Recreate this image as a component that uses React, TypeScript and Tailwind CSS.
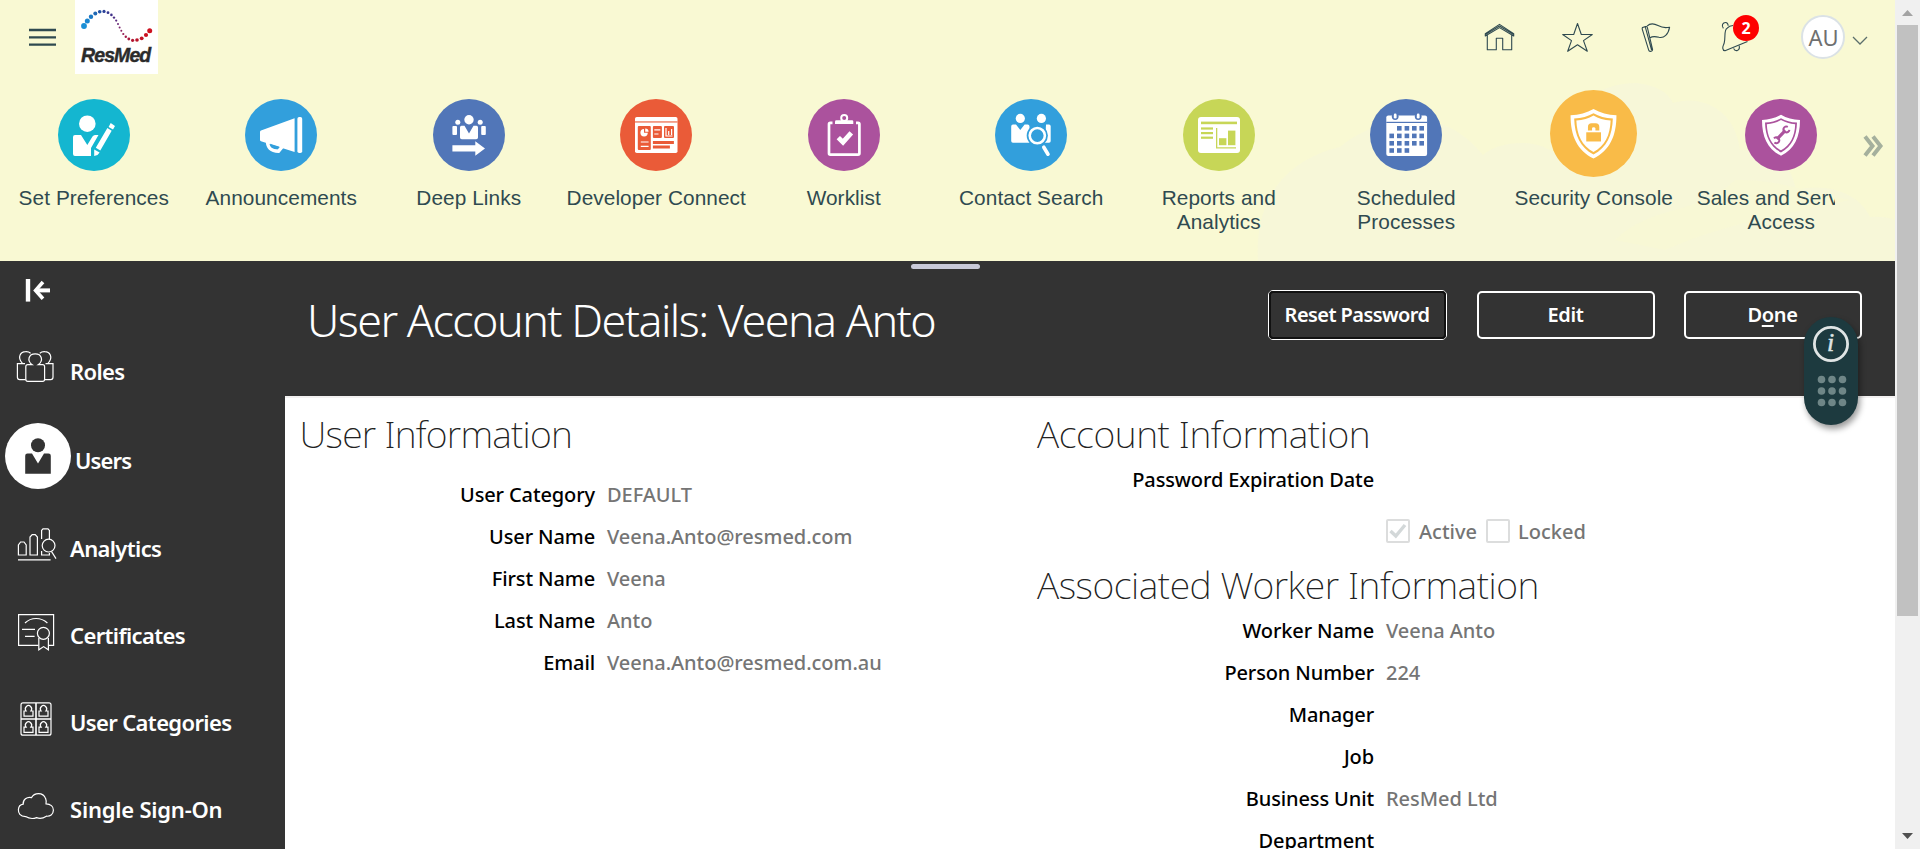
import React from "react";

type Tile = { label: string; color: string; icon: React.ReactNode; large?: boolean };

function Shield({ children }: { children: React.ReactNode }) {
  return (
    <>
      <path
        d="M36 15.7C30.5 19 24 20.6 17 20.9C17 38 22.5 50 36 56.7C49.5 50 55 38 55 20.9C48 20.6 41.5 19 36 15.7Z"
        fill="#fff"
      />
      <path
        d="M36 19.2C31.5 21.8 26.3 23.2 20 23.6C20.4 37.5 25 47.7 36 53.4C47 47.7 51.6 37.5 52 23.6C45.7 23.2 40.5 21.8 36 19.2Z"
        fill="currentColor"
      />
      <path
        d="M36 21C32 23.4 27.3 24.8 21.8 25.2C22.3 37.5 26.5 46.2 36 51.3C45.5 46.2 49.7 37.5 50.2 25.2C44.7 24.8 40 23.4 36 21Z"
        fill="#fff"
      />
      {children}
    </>
  );
}

const calendarCells: [number, number][] = [
  [27, 27], [34.6, 27], [42, 27], [49.4, 27],
  [19.4, 34.6], [27, 34.6], [34.6, 34.6], [42, 34.6], [49.4, 34.6],
  [19.4, 42], [27, 42], [34.6, 42], [42, 42], [49.4, 42],
  [19.4, 49.2], [27, 49.2], [34.6, 49.2],
];

const tiles: Tile[] = [
  {
    label: "Set Preferences",
    color: "text-[#14b6d0]",
    icon: (
      <g fill="#fff">
        <circle cx="29.3" cy="24.7" r="8.3" />
        <path d="M17 36H23L29.3 46L34.5 37.5Q35.5 36 37 36H40.5L33 49V57H17Q15 57 15 55V38Q15 36 17 36Z" />
        <path d="M52.7 24L57 26.9L55 30.6L50.6 27.9ZM49.4 29L53.7 31.8L42.3 51.6L37.8 48.8ZM36.2 50.5L41.6 53.6L39.5 56L36.2 57Z" />
      </g>
    ),
  },
  {
    label: "Announcements",
    color: "text-[#329fdc]",
    icon: (
      <>
        <path d="M22.5 42C22.5 50 27 52 33.5 52.2L37.5 47.5" fill="none" stroke="#fff" strokeWidth="3.4" />
        <path d="M15 33Q15 32 16 31.6L49.6 19.3V53L16 42.3Q15 42 15 41Z" fill="#fff" />
        <path d="M25 44.8L34.5 47.7Q32 50.3 28 49Q25.4 48 25 44.8Z" fill="currentColor" />
        <rect x="52.4" y="18" width="4.8" height="36" rx="1.8" fill="#fff" />
      </>
    ),
  },
  {
    label: "Deep Links",
    color: "text-[#5176b8]",
    icon: (
      <g fill="#fff">
        <circle cx="36" cy="20.8" r="4.7" />
        <circle cx="24.8" cy="23.3" r="2.5" />
        <circle cx="47.2" cy="23.3" r="2.5" />
        <path d="M28.5 26.7H31.5L36 34.5L40.5 26.7H43.5Q45 26.7 45 28.5V38.5Q45 40.3 43.2 40.3H28.8Q27 40.3 27 38.5V28.5Q27 26.7 28.5 26.7Z" />
        <rect x="19.4" y="27" width="4.6" height="9" rx="1" />
        <rect x="48.2" y="27" width="4.6" height="9" rx="1" />
        <path d="M19.4 46.2H42.3V42.3L52 49.5L42.3 56.7V52.6H19.4Z" />
      </g>
    ),
  },
  {
    label: "Developer Connect",
    color: "text-[#ea5b38]",
    icon: (
      <>
        <rect x="15" y="18" width="42.5" height="36" rx="1.8" fill="#fff" />
        <g fill="currentColor">
          <rect x="15" y="22.4" width="42.5" height="1.1" />
          <rect x="17.8" y="27" width="13" height="24" rx="1" />
          <rect x="32.9" y="27" width="9" height="12" rx="1" />
          <rect x="44" y="27" width="10" height="12" rx="1" />
          <rect x="32.9" y="42" width="21" height="3" />
          <rect x="32.9" y="46.5" width="17" height="3" />
        </g>
        <g fill="none" stroke="#fff" strokeWidth="1.2">
          <path d="M20.8 43H28.6M20.8 47.4H28.6M34.3 30.8H40.3M34.3 35H38.5" />
          <path d="M46 29V37H52.5M48.7 36V32M51.6 36V30" />
        </g>
        <path d="M24 30V33.8H27.8A3.7 3.7 0 1 1 24 30ZM25.2 29.6A3.4 3.4 0 0 1 28.6 32.8H25.2Z" fill="#fff" />
      </>
    ),
  },
  {
    label: "Worklist",
    color: "text-[#ab529d]",
    icon: (
      <>
        <path d="M24.5 23.8H22.3Q21 23.8 21 25.2V54.2Q21 55.6 22.3 55.6H50Q51.4 55.6 51.4 54.2V25.2Q51.4 23.8 50 23.8H48" fill="none" stroke="#fff" strokeWidth="2.7" />
        <path d="M27 25V22.6Q27 21.3 28.4 21.3H44Q45.3 21.3 45.3 22.6V25Z" fill="#fff" />
        <circle cx="36.2" cy="19" r="3" fill="none" stroke="#fff" strokeWidth="2" />
        <path d="M30.3 38.6L35 43.2L43.3 33.8" fill="none" stroke="#fff" strokeWidth="4.8" />
      </>
    ),
  },
  {
    label: "Contact Search",
    color: "text-[#329fdc]",
    icon: (
      <>
        <g fill="#fff">
          <circle cx="25.3" cy="19.4" r="4.6" />
          <circle cx="46.4" cy="19.4" r="4.6" />
          <path d="M18 25.6H21L25.3 31L29.6 25.6H32.6Q34.5 25.6 34.5 27.5V43.7H18Q16.2 43.7 16.2 42V27.4Q16.2 25.6 18 25.6Z" />
          <path d="M51 25.6H54Q55.7 25.6 55.7 27.4V42Q55.7 43.7 54 43.7H50Z" />
        </g>
        <circle cx="42.3" cy="36.6" r="10.6" fill="currentColor" />
        <circle cx="42.3" cy="36.6" r="7.6" fill="none" stroke="#fff" strokeWidth="2.6" />
        <path d="M48.8 48.2L53 55.2" stroke="#fff" strokeWidth="3.6" strokeLinecap="round" />
      </>
    ),
  },
  {
    label: "Reports and Analytics",
    color: "text-[#c7d657]",
    icon: (
      <>
        <rect x="15" y="18" width="42" height="36" rx="3" fill="#fff" />
        <g fill="currentColor">
          <rect x="18" y="22.6" width="36" height="2.6" />
          <rect x="18" y="28.4" width="12" height="2.2" />
          <rect x="18" y="33" width="12" height="2.2" />
          <rect x="18" y="37.6" width="12" height="2.2" />
          <path d="M33 29H34.3V48.3H53V49.5H33Z" />
          <rect x="36" y="39.2" width="7.4" height="7" />
          <rect x="45" y="31.6" width="7.4" height="14.6" />
        </g>
      </>
    ),
  },
  {
    label: "Scheduled Processes",
    color: "text-[#5176b8]",
    icon: (
      <>
        <rect x="16.3" y="16.6" width="40.8" height="40.4" rx="2" fill="#fff" />
        <g fill="currentColor">
          <rect x="16.3" y="22.8" width="40.8" height="1.2" />
          {calendarCells.map(([x, y]) => (
            <rect key={`${x}-${y}`} x={x} y={y} width="4.6" height="4.6" />
          ))}
          <circle cx="25.2" cy="17.6" r="3.4" />
          <circle cx="48.2" cy="17.6" r="3.4" />
        </g>
        <rect x="23.8" y="14.6" width="2.8" height="5" rx="1.3" fill="#fff" />
        <rect x="46.8" y="14.6" width="2.8" height="5" rx="1.3" fill="#fff" />
      </>
    ),
  },
  {
    label: "Security Console",
    color: "text-[#f9bb48]",
    large: true,
    icon: (
      <Shield>
        <rect x="30" y="35" width="12.2" height="7.6" fill="currentColor" />
        <path d="M31.4 33.6V30.6Q31.4 27.6 34.4 27.6H37.8Q40.8 27.6 40.8 30.6V33.6H37.6V31.6Q37.6 30.8 36.1 30.8Q34.8 30.8 34.8 31.6V33.6Z" fill="currentColor" />
      </Shield>
    ),
  },
  {
    label: "Sales and Service Access",
    color: "text-[#ab529d]",
    icon: (
      <Shield>
        <path d="M32 40.2L40.4 31.4" stroke="currentColor" strokeWidth="3.2" />
        <path d="M42.8 27.8A3 3 0 1 0 44.4 30.8M29.4 43.6A3 3 0 1 0 29 39.4" fill="none" stroke="currentColor" strokeWidth="2" />
      </Shield>
    ),
  },
];

function HeaderBackdrop() {
  return (
    <svg className="absolute inset-0" width="1895" height="261" viewBox="0 0 1895 261">
      <path
        d="M1258 261C1254 200 1285 160 1340 147C1375 118 1440 100 1483 155C1500 140 1540 138 1556 155C1560 105 1600 83 1637 83C1655 85 1668 92 1673 103C1700 94 1735 108 1740 150C1775 150 1790 160 1796 190C1830 182 1860 195 1870 217Q1885 216 1895 220V261Z"
        fill="#f7f7d8"
      />
      <path d="M1615 240C1650 205 1700 215 1735 180C1780 180 1800 190 1850 200C1780 215 1720 225 1665 250Z" fill="#f8f8d5" />
    </svg>
  );
}

function TopBar() {
  return (
    <div className="relative flex h-[74px] justify-between text-[#2f4a50]">
      <div className="flex">
        <svg width="75" height="74" viewBox="0 0 75 74" stroke="currentColor" strokeWidth="2.3">
          <path d="M29 30H56M29 37.3H56M29 44.6H56" />
        </svg>
        <Logo />
      </div>
      <svg width="320" height="74" viewBox="1440 0 320 74" className="ml-auto" fill="none" stroke="currentColor" strokeWidth="1.1" strokeLinejoin="round">
        <path d="M1485.3 33.6L1499.5 24.4L1513.7 33.6V36L1499.5 27.6L1485.3 36ZM1487.3 35V49.8H1496.3V38.3H1502.7V49.8H1511.7V35M1485.3 34.6L1499.5 26L1513.7 34.6" />
        <path d="M1577.5 23.5L1581.3 34.5H1592.3L1583.5 40.6L1587.3 51.3L1577.5 44.8L1567.7 51.3L1571.5 40.6L1562.7 34.5H1573.7Z" />
        <path d="M1642.5 27.5L1645.5 26.6Q1647 26.4 1647.4 27.6L1652.6 49.6Q1652.6 51 1651.3 51.2L1650.2 51.4Q1649 51.4 1648.7 50.2L1642.3 29.3Q1642 28 1642.5 27.5ZM1645.2 26.7L1651.6 50" />
        <path d="M1647 26.2C1650 23.2 1654 23.4 1658 25.6C1662 27.8 1665.5 28.2 1669.6 27.2C1668.4 34.5 1664 38.4 1659 37.3C1655.6 36.4 1652.6 36 1650 37.8" />
        <path d="M1733 25.5C1730.5 25.6 1728.5 26.6 1727.2 28.2C1723.6 29.5 1725.8 38 1724.2 43C1723.4 45.6 1722.4 46.6 1722.8 48.4Q1723 50.6 1725 50.8L1747.5 41.4" />
        <path d="M1723.4 28.4C1721 25.5 1723 22.4 1725.6 22.5Q1728 22.6 1728.2 25.8M1733.6 48.4Q1734.5 51 1737.2 50.6Q1740 49.6 1739.2 45.6" />
      </svg>
      <div className="flex w-[135px] items-center pl-[41px]">
        <div className="flex h-[44px] w-[44px] items-center justify-center rounded-full border-2 border-[#dbe2e6] bg-white pl-px font-['Noto_Sans',sans-serif] text-[22px] text-[#6f6f6f]">
          AU
        </div>
        <svg width="16" height="9" viewBox="0 0 16 9" className="mt-[7px] ml-[7px]" fill="none" stroke="#5c6f6c" strokeWidth="1.3">
          <path d="M1 1L8 8L15 1" />
        </svg>
      </div>
      <div className="absolute top-[15px] left-[1733px] flex h-[26px] w-[26px] items-center justify-center rounded-full bg-[#fe0000] font-['Noto_Sans',sans-serif] text-[16px] font-bold text-white">
        2
      </div>
    </div>
  );
}

const logoDots: [number, number, number, string][] = [
  [9, 26, 2.9, "#1a8fd6"], [12.3, 21, 2.5, "#1a86d0"], [16, 16.8, 2.2, "#1b78c4"], [20.3, 13.5, 2, "#2068b4"],
  [24.7, 11.7, 1.8, "#2353a4"], [29, 11.4, 1.6, "#2c4199"], [33, 12.7, 1.4, "#34358f"], [36.4, 14.9, 1.3, "#3f3089"],
  [39, 17.6, 1.2, "#4d2e84"], [41.2, 20.6, 1.1, "#5c2c80"], [43, 23.9, 1, "#6b2a78"], [44.6, 27.4, 1, "#7c2870"],
  [46.3, 30.8, 1, "#8a2362"], [48.3, 34, 1.1, "#971e55"], [50.8, 36.8, 1.2, "#a11b48"], [53.8, 39, 1.4, "#aa183c"],
  [57.6, 40.3, 1.6, "#b21531"], [62, 40, 1.8, "#ba1329"], [66.7, 38.3, 1.9, "#c31124"], [71, 35, 2.1, "#cb1120"],
  [74.7, 30.8, 2.5, "#cd1220"],
];

function Logo() {
  return (
    <div className="relative h-[74px] w-[83px] bg-white">
      <svg width="83" height="74" viewBox="0 0 83 74">
        {logoDots.map(([x, y, r, c]) => (
          <circle key={x} cx={x} cy={y} r={r} fill={c} />
        ))}
      </svg>
      <span className="absolute top-[44px] left-[6px] font-['Liberation_Sans',sans-serif] text-[19.5px] leading-[22px] font-bold tracking-[-0.9px] text-[#2b2b2b] italic [-webkit-text-stroke:0.4px_#2b2b2b]">
        ResMed
      </span>
    </div>
  );
}

function TileStrip() {
  return (
    <div className="relative flex">
      <div className="flex w-[1835px] overflow-hidden pt-[16px]">
        {tiles.map((t) => (
          <div key={t.label} className="flex w-[187.5px] shrink-0 flex-col items-center">
            <div className={`flex h-[90px] items-center justify-center ${t.color}`}>
              <svg
                width={t.large ? 87 : 72}
                height={t.large ? 87 : 72}
                viewBox="0 0 72 72"
                className={t.large ? "-mt-[3px]" : ""}
              >
                <circle cx="36" cy="36" r="36" fill="currentColor" />
                {t.icon}
              </svg>
            </div>
            <div
              className={`mt-[6px] text-center font-['Liberation_Sans',Arial,sans-serif] text-[20.8px] leading-[24px] tracking-[0.08px] text-[#2f4a50] ${
                t.label.endsWith("Analytics") || t.label.endsWith("Processes") ? "w-[130px]" : "w-[187px]"
              }`}
            >
              {t.label}
            </div>
          </div>
        ))}
      </div>
      <svg width="60" height="40" viewBox="0 0 60 40" className="mt-[52px] fill-none stroke-[#a5b09d]" strokeWidth="4">
        <path d="M30 10.5L37.5 20L30 29.5M38 10.5L45.5 20L38 29.5" />
      </svg>
    </div>
  );
}

const person = "h-9v-5.2h2.1a3.1 3.3 0 1 1 4.8 0h2.1Z";

const navItems: {
  label: string;
  height: string;
  box: string;
  icon: React.ReactNode;
  active?: boolean;
  tracking?: string;
}[] = [
  {
    label: "Roles",
    height: "h-[89px]",
    box: "0 327 71 89",
    icon: (
      <>
        <path d="M25 363.6H17.4V377.2Q17.4 379.6 19.8 379.6H25.6M22.4 363.4C16.6 356.5 21 351.6 25.6 351.6Q28.6 351.4 30.6 353.2M45.5 363.6H53V377.2Q53 379.6 50.6 379.6H44.8M48 363.4C53.8 356.5 49.4 351.6 44.8 351.6Q41.8 351.4 39.8 353.2" />
        <path d="M27.8 364.7H32.2C26.6 360.6 28.6 353.8 35.2 353.8C41.8 353.8 43.8 360.6 38.2 364.7H42.6Q44.6 364.7 44.6 366.7V379.3Q44.6 381.4 42.6 381.4H27.8Q25.8 381.4 25.8 379.3V366.7Q25.8 364.7 27.8 364.7Z" />
      </>
    ),
  },
  {
    label: "Users",
    height: "h-[89px]",
    box: "0 416 76 89",
    active: true,
    tracking: "tracking-[-0.85px]",
    icon: (
      <>
        <circle cx="38" cy="456" r="33" fill="#fff" stroke="none" />
        <g fill="#333" stroke="none">
          <circle cx="38" cy="445.3" r="7" />
          <path d="M27.5 453.5H32L38 463.5L44 453.5H48.5Q50.8 453.5 50.8 455.8V473.8H25.2V455.8Q25.2 453.5 27.5 453.5Z" />
        </g>
      </>
    ),
  },
  {
    label: "Analytics",
    height: "h-[87px]",
    box: "0 505 71 87",
    icon: (
      <>
        <path d="M18.4 555V545L20.6 542H24L26.2 545V555ZM30 555V537L32.2 534.6H35.2L37.4 537V555ZM41.6 539V530.4L43 528.8H48L49.4 530.4V539M41.6 551V555H49.4V553" />
        <circle cx="48.6" cy="545.6" r="6.4" />
        <path d="M51.6 551.6L56 558.6" />
        <path d="M18 559.8H50.6" />
      </>
    ),
  },
  {
    label: "Certificates",
    height: "h-[87px]",
    box: "0 592 71 87",
    icon: (
      <>
        <path d="M38.4 645.3H18.6V614.6H53.6V645.3H48.6M25 623C31 617 41 617 47.4 623M22 629.3H35M25 636.3H34.6" />
        <circle cx="43.4" cy="633.3" r="6" />
        <path d="M38.8 638V649.8L43.6 646.6L48.4 649.8V638" />
      </>
    ),
  },
  {
    label: "User Categories",
    height: "h-[87px]",
    box: "0 679 71 87",
    icon: (
      <>
        <rect x="21" y="702.8" width="30" height="32.4" rx="2" />
        <path d="M36 703V735M21 719H51" strokeWidth="1.6" />
        <path d={`M33 716.2${person}`} />
        <path d={`M48 716.2${person}`} />
        <path d={`M33 732.4${person}`} />
        <path d={`M48 732.4${person}`} />
      </>
    ),
  },
  {
    label: "Single Sign-On",
    height: "h-[87px]",
    box: "0 766 71 87",
    tracking: "tracking-[-0.22px]",
    icon: (
      <path d="M25.6 816.6C20 816.4 18.2 813 18.4 809.6C18.6 806.4 20.6 804.6 23.2 804.2C22.6 799.6 27 796.4 31.6 797.6C34 792.6 43 791.6 45.6 798.6Q46.6 801 46 803.8C50.4 804 53.6 806.4 53.4 810.2C53.2 814.6 50 816.6 46.4 816.2C42.6 818.6 38.6 818.4 36.6 817.6C33 819 28.6 818.4 25.6 816.6Z" />
    ),
  },
];

function Sidebar() {
  return (
    <nav className="h-[588px] w-[285px] shrink-0 overflow-hidden bg-[#333]">
      <svg width="71" height="66" viewBox="0 261 71 66" fill="none" stroke="#fff" strokeWidth="3.6">
        <path d="M28 279V301.6" strokeWidth="4.4" />
        <path d="M36 290.4H50" strokeWidth="4" />
        <path d="M43 282L35.6 290.4L43 298.8" />
      </svg>
      {navItems.map((n) => (
        <a key={n.label} className={`flex items-center ${n.height}`}>
          <svg
            width={n.active ? 76 : 71}
            viewBox={n.box}
            className="h-full shrink-0"
            fill="none"
            stroke="#fff"
            strokeWidth="1.2"
          >
            {n.icon}
          </svg>
          <span
            className={`-ml-px text-[22px] font-semibold whitespace-nowrap text-white ${n.tracking ?? "tracking-[-0.64px]"}`}
          >
            {n.label}
          </span>
        </a>
      ))}
    </nav>
  );
}

function Row({ label, value, left }: { label: string; value?: string; left?: boolean }) {
  return (
    <div className="flex h-[42px] items-center text-[20px] font-medium whitespace-nowrap">
      <span className={`text-right tracking-[-0.12px] text-black ${left ? "w-[310px]" : "w-[338px]"}`}>{label}</span>
      <span className="ml-[12px] tracking-[-0.04px] text-[#757575]">{value}</span>
    </div>
  );
}

const outline = "flex h-[48px] w-[178px] items-center justify-center rounded-[5px] border-2 border-white";

function Panel() {
  return (
    <div className="flex w-[1610px] flex-col">
      <div className="flex h-[135px] justify-between bg-[#333] pl-[22px] text-white">
        <h1 className="pt-[29px] text-[44.8px] leading-[60px] font-light tracking-[-1.52px] whitespace-nowrap">
          User Account Details: Veena Anto
        </h1>
        <div className="flex items-start gap-[29px] pt-[30px] pr-[33.5px] text-[20px] font-semibold tracking-[-0.35px]">
          <button className="-mt-px mr-px h-[50px] w-[179px] rounded-[5px] border border-white tracking-[-0.58px]">
            <span className="flex h-full items-center justify-center rounded-[4px] border-2 border-[#111]">Reset Password</span>
          </button>
          <button className={outline}>Edit</button>
          <button className={outline}>
            <span>
              D<span className="underline decoration-2 underline-offset-[3px]">o</span>ne
            </span>
          </button>
        </div>
      </div>
      <div className="flex h-[453px] overflow-hidden border-t-2 border-[#f3f1f1] bg-white">
        <section className="w-[751px] pt-[12px]">
          <h2 className="pl-[14.5px] text-[37.5px] leading-[48px] font-extralight tracking-[-0.76px] text-[#222]">
            User Information
          </h2>
          <div className="mt-[16px]">
            <Row left label="User Category" value="DEFAULT" />
            <Row left label="User Name" value="Veena.Anto@resmed.com" />
            <Row left label="First Name" value="Veena" />
            <Row left label="Last Name" value="Anto" />
            <Row left label="Email" value="Veena.Anto@resmed.com.au" />
          </div>
        </section>
        <section className="pt-[12px]">
          <h2 className="pl-px text-[37.5px] leading-[48px] font-extralight tracking-[-0.42px] text-[#222]">
            Account Information
          </h2>
          <div className="mt-px">
            <Row label="Password Expiration Date" />
          </div>
          <div className="mt-[10px] flex h-[42px] items-center pl-[350px] text-[20px] font-medium text-[#757575]">
            <span className="mb-[2px] flex h-[24px] w-[24px] items-center justify-center rounded-[2px] border-2 border-[#dcdddd]">
              <svg width="18" height="16" viewBox="0 0 18 16" fill="none" stroke="#d3d8d9" strokeWidth="3.4">
                <path d="M1.5 8L6.8 13L16 2" />
              </svg>
            </span>
            <span className="ml-[9px]">Active</span>
            <span className="mb-[2px] ml-[9px] h-[24px] w-[24px] rounded-[2px] border-2 border-[#dcdddd]" />
            <span className="ml-[8px]">Locked</span>
          </div>
          <h2 className="mt-[8px] pl-px text-[37.5px] leading-[48px] font-extralight tracking-[-0.46px] text-[#222]">
            Associated Worker Information
          </h2>
          <div className="mt-px">
            <Row label="Worker Name" value="Veena Anto" />
            <Row label="Person Number" value="224" />
            <Row label="Manager" />
            <Row label="Job" />
            <Row label="Business Unit" value="ResMed Ltd" />
            <Row label="Department" />
          </div>
        </section>
      </div>
    </div>
  );
}

function HelpWidget() {
  return (
    <div className="absolute top-[317px] left-[1804px] h-[108px] w-[54px] rounded-full bg-[#1d3a3f] shadow-[2px_4px_6px_rgba(0,0,0,0.4)]">
      <svg width="54" height="108" viewBox="0 0 54 108">
        <circle cx="27" cy="27" r="16.6" fill="none" stroke="#dfe4e4" strokeWidth="2.8" />
        {[62.5, 74, 85.5].map((y) =>
          [17.5, 28, 38.5].map((x) => <circle key={`${x}-${y}`} cx={x} cy={y} r="3.8" fill="#6f8687" />)
        )}
      </svg>
      <span className="absolute top-[12px] left-[23px] font-['Liberation_Serif',serif] text-[26px] leading-[28px] text-[#dfe4e4] italic [-webkit-text-stroke:0.5px_#dfe4e4]">
        i
      </span>
    </div>
  );
}

function Scrollbar() {
  return (
    <div className="flex h-[849px] w-[25px] flex-col items-center bg-[#f0f0f0]">
      <svg width="25" height="25" viewBox="0 0 25 25" className="shrink-0">
        <path d="M7 16L12.5 10L18 16Z" fill="#a3a3a3" />
      </svg>
      <div className="h-[591px] w-[21px] bg-[#c1c1c1]" />
      <svg width="25" height="25" viewBox="0 0 25 25" className="mt-auto shrink-0">
        <path d="M7 9L12.5 15L18 9Z" fill="#505050" />
      </svg>
    </div>
  );
}

export default function App() {
  return (
    <div className="relative flex h-[849px] w-[1920px] overflow-hidden bg-white font-['Noto_Sans','Open_Sans',sans-serif]">
      <div className="flex w-[1895px] flex-col">
        <header className="relative h-[261px] bg-[#f9f9d3]">
          <HeaderBackdrop />
          <TopBar />
          <TileStrip />
        </header>
        <div className="flex h-[588px]">
          <Sidebar />
          <Panel />
        </div>
      </div>
      <Scrollbar />
      <div className="absolute top-[264px] left-[911px] h-[5px] w-[69px] rounded-full bg-[#c9cad9]" />
      <HelpWidget />
    </div>
  );
}
